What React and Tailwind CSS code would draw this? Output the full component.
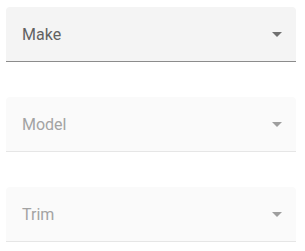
const fields = [
  { label: 'Make', disabled: false },
  { label: 'Model', disabled: true },
  { label: 'Trim', disabled: true },
];

function SelectField({ label, disabled }) {
  return (
    <div
      className={
        'relative flex h-[55px] items-center rounded-t-[4px] border-b pl-4 pr-3 ' +
        (disabled ? 'bg-[#fafafa] border-[#e6e6e6]' : 'bg-[#f4f4f4] border-[#8c8c8c]')
      }
    >
      <span
        className={'flex-1 text-[16px] pt-[1px] ' + (disabled ? 'text-[#a3a3a3]' : 'text-[#626262]')}
        style={{ fontFamily: 'Roboto, sans-serif' }}
      >
        {label}
      </span>
      <svg width="10" height="5" viewBox="0 0 10 5" className="mr-[2px] mt-[1px]">
        <path d="M0 0 L10 0 L5 5 Z" fill={disabled ? '#9e9e9e' : '#707070'} />
      </svg>
    </div>
  );
}

export default function App() {
  return (
    <div className="min-h-[251px] w-[305px] bg-white pl-[6px] pt-[7px]">
      <div className="flex w-[290px] flex-col gap-[35px]">
        {fields.map((f) => (
          <SelectField key={f.label} {...f} />
        ))}
      </div>
    </div>
  );
}
